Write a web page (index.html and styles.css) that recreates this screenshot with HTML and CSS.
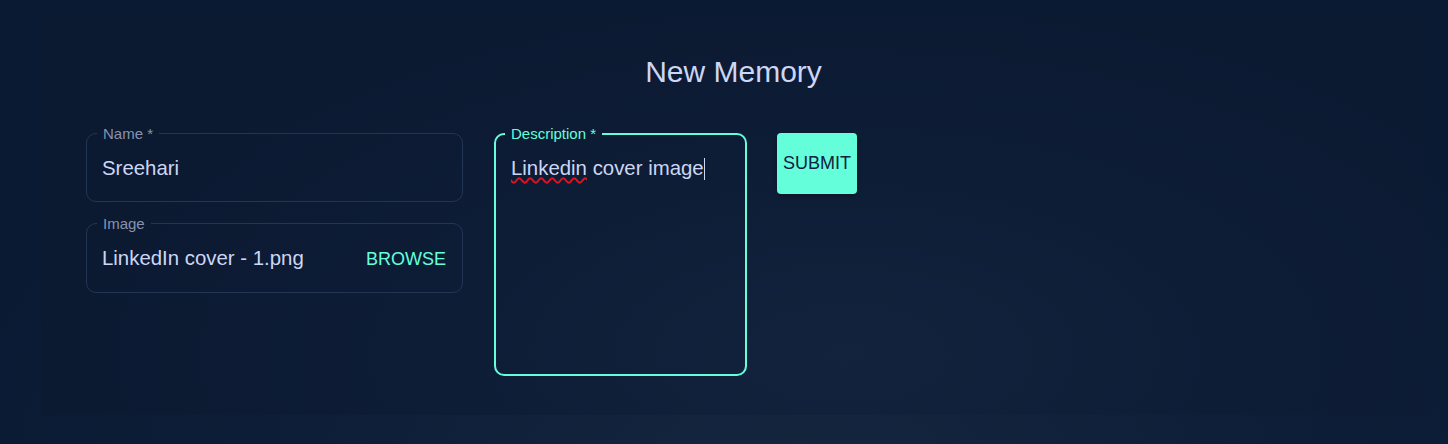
FILE: index.html
```html
<!DOCTYPE html>
<html lang="en">
<head>
<meta charset="utf-8">
<title>New Memory</title>
<link rel="stylesheet" href="styles.css">
</head>
<body>
<main class="page">
  <section class="panel">
    <h1 class="title">New Memory</h1>
    <form class="form">
      <div class="col">
        <fieldset class="field">
          <legend class="label">Name *</legend>
          <div class="value">Sreehari</div>
        </fieldset>
        <fieldset class="field field-file">
          <legend class="label">Image</legend>
          <div class="value value-row">
            <span>LinkedIn cover - 1.png</span>
            <span class="browse">BROWSE</span>
          </div>
        </fieldset>
      </div>
      <fieldset class="field field-desc">
        <legend class="label">Description *</legend>
        <div class="value"><span class="misspelt">Linkedin</span> cover image<span class="caret"></span></div>
      </fieldset>
      <button type="button" class="submit">SUBMIT</button>
    </form>
  </section>
</main>
</body>
</html>
```
FILE: styles.css
```css
html, body {
  margin: 0;
  padding: 0;
}
body {
  width: 1448px;
  height: 444px;
  overflow: hidden;
  font-family: "Liberation Sans", Arial, sans-serif;
  background: radial-gradient(ellipse 900px 500px at 55% 110%, #17263f 0%, #0f1e38 55%, #0b1a33 100%);
  color: #ccd6f6;
}
.page {
  padding: 13px 23px 29px 42px;
  box-sizing: border-box;
  height: 444px;
}
.panel {
  height: 402px;
  box-sizing: border-box;
  padding: 41px 44px 0 44px;
  background: radial-gradient(ellipse 800px 380px at 58% 85%, #14233d 0%, #0e1d36 50%, #0b1a31 100%);
}
.title {
  margin: 0;
  text-align: center;
  font-size: 30px;
  font-weight: 400;
  line-height: 36px;
  color: #ccd6f6;
}
.form {
  margin-top: 35px;
  display: flex;
  align-items: flex-start;
}
.col {
  width: 377px;
  display: flex;
  flex-direction: column;
  gap: 13px;
}
.field {
  margin: 0;
  min-width: 0;
  border: 1px solid #233554;
  border-radius: 10px;
  padding: 0 16px 0 10px;
}
.label {
  padding: 0 6px;
  font-size: 15px;
  line-height: 17px;
  color: #8892b0;
}
.value {
  font-size: 20.4px;
  line-height: 23px;
  padding: 15px 0 21px 5px;
  color: #ccd6f6;
  white-space: nowrap;
}
.value-row {
  display: flex;
  justify-content: space-between;
  align-items: baseline;
}
.browse {
  font-size: 18px;
  color: #64ffda;
}
.field-desc {
  width: 253px;
  height: 251px;
  box-sizing: border-box;
  margin-left: 31px;
  border: 2px solid #64ffda;
  padding: 0 9px;
}
.field-desc .label {
  color: #64ffda;
  line-height: 18px;
}
.field-desc .value {
  padding: 14px 0 0 6px;
}
.misspelt {
  text-decoration: underline wavy #e8101e;
  text-decoration-thickness: 1.5px;
  text-underline-offset: 2px;
}
.caret {
  display: inline-block;
  width: 1px;
  height: 22px;
  background: #ccd6f6;
  vertical-align: -5px;
}
.submit {
  margin-left: 30px;
  margin-top: 8px;
  width: 80px;
  height: 61px;
  border: 0;
  border-radius: 4px;
  background: #64ffda;
  color: #112240;
  font-family: "Liberation Sans", Arial, sans-serif;
  font-size: 18px;
  padding: 0;
  box-shadow: 0 2px 4px rgba(0, 0, 0, 0.3);
}
```
